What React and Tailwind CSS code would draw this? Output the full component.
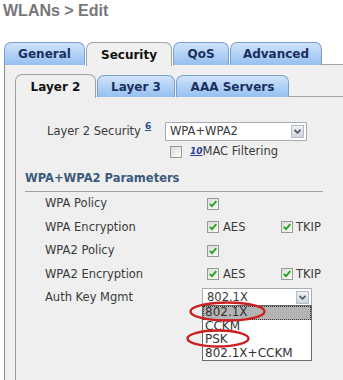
import React from 'react';

const FONT = "font-['DejaVu_Sans',Verdana,sans-serif]";

function Tab({ label, width, active, height = 'h-[23px]' }) {
  if (active) {
    return (
      <div
        className={`${width} h-[24px] -mb-px relative z-10 flex items-center justify-center rounded-t-[7px] border border-b-0 border-[#a3a3a3] bg-[#f0f0f0] text-[12px] font-bold text-[#111]`}
      >
        {label}
      </div>
    );
  }
  return (
    <div
      className={`${width} ${height} flex items-center justify-center rounded-t-[7px] border border-b-0 border-[#7d9fcc] bg-gradient-to-b from-[#cfe3fb] to-[#95c0f0] text-[12px] font-bold text-[#1c305e]`}
    >
      {label}
    </div>
  );
}

function CheckBox({ checked }) {
  return (
    <svg width="12" height="12" viewBox="0 0 12 12" className="shrink-0">
      <defs>
        <linearGradient id="cbg" x1="0" y1="0" x2="1" y2="1">
          <stop offset="0" stopColor="#dcdcd6" />
          <stop offset="1" stopColor="#fbfbf8" />
        </linearGradient>
      </defs>
      <rect x="0.5" y="0.5" width="11" height="11" fill="url(#cbg)" stroke="#8f9e8f" />
      {checked && (
        <path d="M2.8 5.8 L5 8.2 L9.3 3.2" fill="none" stroke="#21a121" strokeWidth="1.8" />
      )}
    </svg>
  );
}

function Select({ value, width }) {
  return (
    <div className={`${width} h-[19px] flex items-center justify-between border border-[#a5acb5] bg-white pl-[4px] pr-[2px]`}>
      <span className="text-[11.5px] text-[#3a3a3a] leading-none">{value}</span>
      <span className="w-[13px] h-[13px] flex items-center justify-center border border-[#b5bcc6] bg-gradient-to-b from-[#eef1f5] to-[#cfd5de]">
        <svg width="7" height="5" viewBox="0 0 7 5">
          <path d="M0.5 0.8 L3.5 3.8 L6.5 0.8" fill="none" stroke="#4d5560" strokeWidth="1.6" />
        </svg>
      </span>
    </div>
  );
}

function Row({ label, children }) {
  return (
    <div className="h-[23.5px] flex items-center pl-[29px]">
      <div className="w-[162px] text-[11.5px] text-[#3a3a3a]">{label}</div>
      {children}
    </div>
  );
}

function Enc() {
  return (
    <>
      <div className="w-[74px] flex items-center gap-[4px]">
        <CheckBox checked />
        <span className="text-[11.5px] text-[#3a3a3a]">AES</span>
      </div>
      <div className="flex items-center gap-[3px]">
        <CheckBox checked />
        <span className="text-[11.5px] text-[#3a3a3a]">TKIP</span>
      </div>
    </>
  );
}

export default function App() {
  return (
    <div className={`w-[343px] h-[380px] overflow-hidden bg-white ${FONT}`}>
      <div className="h-[42px] pl-[3px] pt-[1px] font-['Liberation_Sans',Arial,sans-serif] text-[16px] font-bold text-[#777] leading-[19px]">
        WLANs &gt; Edit
      </div>

      {/* main tabs */}
      <div className="flex items-end pl-[4px] h-[23px]">
        <Tab label="General" width="w-[81px]" />
        <div className="w-px" />
        <Tab label="Security" width="w-[86px]" active />
        <div className="w-px" />
        <Tab label="QoS" width="w-[56px]" />
        <div className="w-px" />
        <Tab label="Advanced" width="w-[92px]" />
        <div className="flex-1 h-full border-b border-[#a3a3a3]" />
      </div>

      <div className="ml-[4px] h-[315px] border-l border-[#8a8a8a] bg-[#f0f0f0] pl-[10px] pt-[10px]">
        {/* sub tabs */}
        <div className="flex items-end h-[22px]">
          <Tab label="Layer 2" width="w-[81px]" active />
          <div className="w-px" />
          <Tab label="Layer 3" width="w-[78px]" height="h-[22px]" />
          <div className="w-px" />
          <Tab label="AAA Servers" width="w-[113px]" height="h-[22px]" />
          <div className="flex-1 h-full border-b border-[#a3a3a3]" />
        </div>

        <div className="h-[300px] border-l border-[#9a9a9a] bg-[#efefef]">
          <div className="pt-[25px] pl-[31px] flex items-center h-[44px]">
            <div className="w-[118px] flex items-start text-[11.5px] text-[#3a3a3a]">
              Layer 2 Security
              <span className="ml-[4px] -mt-[3px] text-[9px] font-bold text-[#2b4a8c] underline">6</span>
            </div>
            <Select value="WPA+WPA2" width="w-[142px]" />
          </div>

          <div className="mt-[5px] h-[12px] pl-[154px] flex items-center">
            <CheckBox />
            <span className="ml-[8px] text-[9px] italic font-bold text-[#2b3f9a] underline">10</span>
            <span className="text-[11.5px] text-[#3a3a3a]">MAC Filtering</span>
          </div>

          <div className="mt-[12px] pl-[9px] text-[11.5px] font-bold text-[#3c5a7c] leading-[16px]">
            WPA+WPA2 Parameters
          </div>
          <div className="mt-[5px] ml-[9px] mr-[20px] h-px bg-[#9aa3ab]" />

          <Row label="WPA Policy">
            <CheckBox checked />
          </Row>
          <Row label="WPA Encryption">
            <Enc />
          </Row>
          <Row label="WPA2 Policy">
            <CheckBox checked />
          </Row>
          <Row label="WPA2 Encryption">
            <Enc />
          </Row>
          <Row label="Auth Key Mgmt">
            <div className="relative -ml-[5px]">
              <Select value="802.1X" width="w-[110px]" />
              <div className="absolute left-0 top-[17px] w-[110px] border border-[#6a6a6a] bg-white text-[12px] text-[#333] leading-[13.5px] z-10">
                <div className="bg-[#b3b3b3] outline-1 outline-dotted outline-[#333] -outline-offset-1 pl-[2px]">802.1X</div>
                <div className="pl-[2px]">CCKM</div>
                <div className="pl-[2px]">PSK</div>
                <div className="pl-[2px]">802.1X+CCKM</div>
              </div>
              <svg className="absolute -left-[13px] top-[13px] z-20" width="77" height="21" viewBox="0 0 77 21">
                <ellipse cx="38.5" cy="10.5" rx="37" ry="9" fill="none" stroke="#cc1f1f" strokeWidth="2.4" />
              </svg>
              <svg className="absolute -left-[16px] top-[41px] z-20" width="64" height="19" viewBox="0 0 64 19">
                <ellipse cx="32" cy="9.5" rx="30.5" ry="8" fill="none" stroke="#cc1f1f" strokeWidth="2.4" />
              </svg>
            </div>
          </Row>
        </div>
      </div>
    </div>
  );
}
